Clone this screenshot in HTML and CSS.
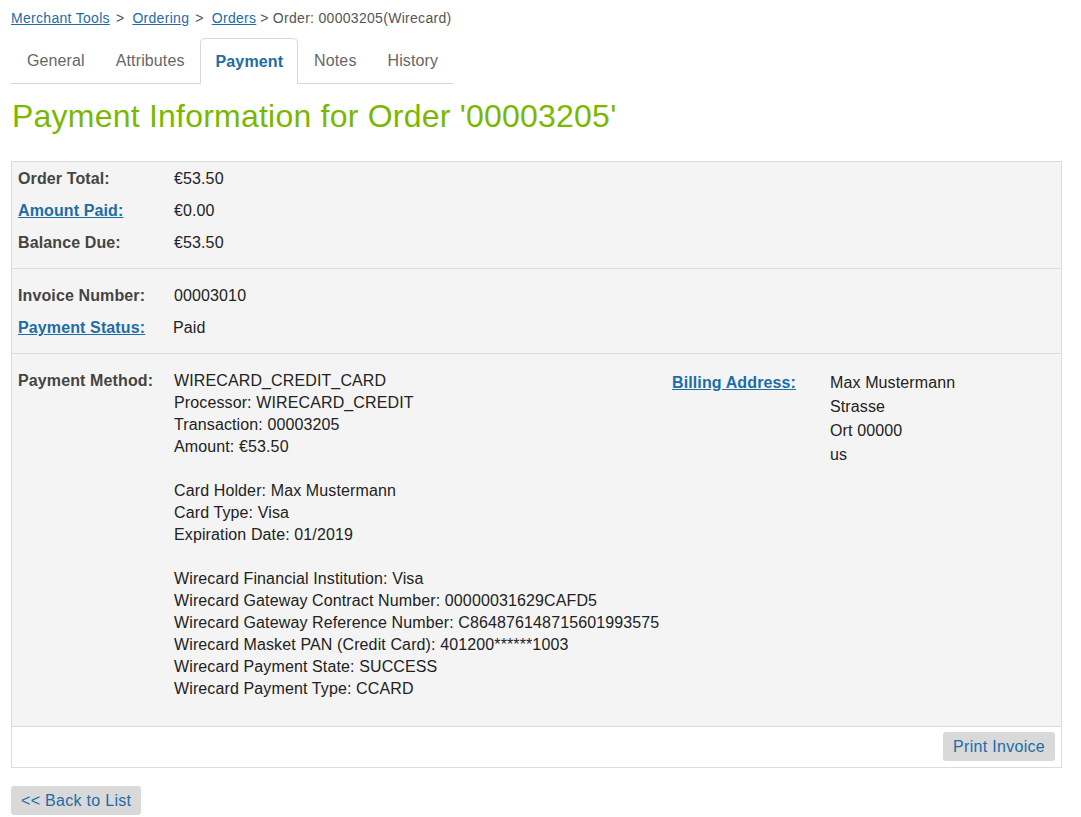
FILE: index.html
```html
<!DOCTYPE html>
<html>
<head>
<meta charset="utf-8">
<link rel="stylesheet" href="styles.css">
</head>
<body>
<div class="page">
  <div class="breadcrumb">
    <a href="#">Merchant Tools</a><span class="sep">&gt;</span><a href="#">Ordering</a><span class="sep">&gt;</span><a href="#">Orders</a><span class="sep sep-last">&gt;</span><span class="current">Order: 00003205(Wirecard)</span>
  </div>
  <ul class="tabs">
    <li class="tab">General</li>
    <li class="tab">Attributes</li>
    <li class="tab active">Payment</li>
    <li class="tab">Notes</li>
    <li class="tab">History</li>
  </ul>
  <h1 class="title">Payment Information for Order '00003205'</h1>

  <div class="box">
    <div class="section first">
      <div class="row"><span class="label">Order Total:</span><span class="value">€53.50</span></div>
      <div class="row"><a href="#" class="label link">Amount Paid:</a><span class="value">€0.00</span></div>
      <div class="row"><span class="label">Balance Due:</span><span class="value">€53.50</span></div>
    </div>
    <div class="section">
      <div class="row"><span class="label">Invoice Number:</span><span class="value">00003010</span></div>
      <div class="row"><a href="#" class="label link">Payment Status:</a><span class="value shift">Paid</span></div>
    </div>
    <div class="section method">
      <span class="label mlabel">Payment Method:</span>
      <div class="mvalue">
        <p>WIRECARD_CREDIT_CARD<br>Processor: WIRECARD_CREDIT<br>Transaction: 00003205<br>Amount: €53.50</p>
        <p>Card Holder: Max Mustermann<br>Card Type: Visa<br>Expiration Date: 01/2019</p>
        <p>Wirecard Financial Institution: Visa<br>Wirecard Gateway Contract Number: 00000031629CAFD5<br>Wirecard Gateway Reference Number: C864876148715601993575<br>Wirecard Masket PAN (Credit Card): 401200******1003<br>Wirecard Payment State: SUCCESS<br>Wirecard Payment Type: CCARD</p>
      </div>
      <a href="#" class="label link blabel">Billing Address:</a>
      <div class="bvalue">Max Mustermann<br>Strasse<br>Ort 00000<br>us</div>
    </div>
    <div class="footer">
      <button class="btn">Print Invoice</button>
    </div>
  </div>

  <div class="back">
    <button class="btn">&lt;&lt; Back to List</button>
  </div>
</div>
</body>
</html>
```

FILE: styles.css
```css
html, body {
  margin: 0;
  padding: 0;
  background: #fff;
}
body {
  font-family: "Liberation Sans", Arial, sans-serif;
  color: #222;
  letter-spacing: 0.12px;
}
.page {
  padding: 0 19px 0 11px;
}
.breadcrumb {
  font-size: 14px;
  line-height: 16px;
  padding-top: 10px;
  color: #555;
  letter-spacing: 0.3px;
}
.breadcrumb a {
  color: #1d6ca5;
  text-decoration: underline;
}
.sep {
  margin: 0 8px 0 6px;
  color: #555;
}
.sep-last {
  margin: 0 4px 0 4px;
}
.tabs {
  display: inline-flex;
  list-style: none;
  margin: 12px 0 0 0;
  padding: 0;
  border-bottom: 1px solid #d8d8d8;
}
.tab {
  font-size: 16px;
  line-height: 46px;
  height: 45px;
  padding: 0 15px 0 16px;
  color: #666;
  margin-bottom: -1px;
}
.tab.active {
  color: #1d6ca5;
  font-weight: bold;
  background: #fff;
  border: 1px solid #d8d8d8;
  border-bottom: none;
  border-radius: 5px 5px 0 0;
  height: 45px;
  line-height: 45px;
  padding: 0 14px 0 15px;
}
.title {
  font-size: 32px;
  font-weight: normal;
  color: #7ab800;
  line-height: 36px;
  letter-spacing: 0.22px;
  margin: 14px 0 27px 1px;
}
.box {
  border: 1px solid #dcdcdc;
  background: #f4f4f4;
}
.section {
  padding: 11px 6px 9px;
  border-bottom: 1px solid #dcdcdc;
}
.section.first {
  padding-top: 1px;
}
.row {
  display: flex;
  line-height: 32px;
  font-size: 16px;
}
.label {
  width: 156px;
  flex: none;
  font-weight: bold;
  color: #444;
  font-size: 16px;
}
.link {
  color: #1d6ca5;
  text-decoration: underline;
}
.value {
  color: #222;
}
.shift {
  margin-left: -1px;
}
.method {
  display: grid;
  grid-template-columns: 156px 498px 158px 1fr;
  padding-top: 16px;
  padding-bottom: 26px;
  font-size: 16px;
}
.mlabel {
  line-height: 22px;
}
.mvalue p {
  margin: 0 0 22px 0;
  line-height: 22px;
}
.mvalue p:last-child {
  margin-bottom: 0;
}
.blabel {
  line-height: 24px;
  margin-top: 1px;
}
.bvalue {
  line-height: 24px;
  margin-top: 1px;
}
.footer {
  background: #fff;
  display: flex;
  justify-content: flex-end;
  padding: 5px 6px 6px;
}
.btn {
  font-family: "Liberation Sans", Arial, sans-serif;
  font-size: 16px;
  letter-spacing: 0.3px;
  color: #1d6ca5;
  background: #d9d9d9;
  border: none;
  border-radius: 3px;
  height: 29px;
  padding: 0 10px 0 10px;
  line-height: 29px;
}
.back {
  margin-top: 18px;
}
```
